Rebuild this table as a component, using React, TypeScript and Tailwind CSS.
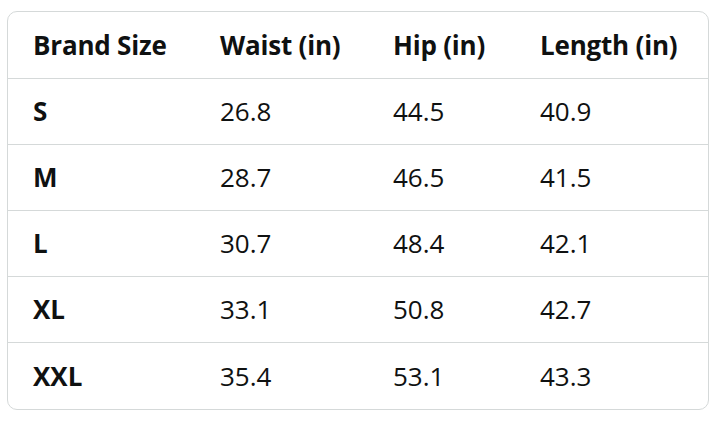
const HEADERS = ["Brand Size", "Waist (in)", "Hip (in)", "Length (in)"];

const ROWS = [
  ["S", "26.8", "44.5", "40.9"],
  ["M", "28.7", "46.5", "41.5"],
  ["L", "30.7", "48.4", "42.1"],
  ["XL", "33.1", "50.8", "42.7"],
  ["XXL", "35.4", "53.1", "43.3"],
];

const GRID = "grid grid-cols-[187px_173px_147px_1fr] items-center";

export default function App() {
  return (
    <div className="h-[442px] w-[720px] bg-white pl-[7px] pt-[11px] font-['Open_Sans',sans-serif] text-[26px] text-[#0f1111]">
      <div className="w-[702px] overflow-hidden rounded-[10px] border border-[#d5d9d9]">
        <div className={`${GRID} h-[67px] border-b border-[#d5d9d9] font-bold`}>
          {HEADERS.map((h) => (
            <div key={h} className="pl-[25px] tracking-[-0.2px]">{h}</div>
          ))}
        </div>
        {ROWS.map((row, i) => (
          <div key={row[0]} className={`${GRID} h-[66px] ${i < ROWS.length - 1 ? "border-b border-[#d5d9d9]" : ""}`}>
            {row.map((c, j) => (
              <div key={j} className={`pl-[25px] ${j === 0 ? "font-bold" : ""}`}>{c}</div>
            ))}
          </div>
        ))}
      </div>
    </div>
  );
}
